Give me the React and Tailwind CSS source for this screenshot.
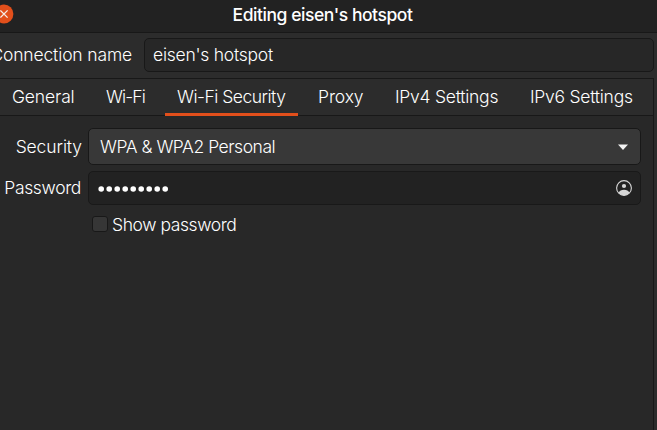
import React from "react";

const tabs = [
  { label: "General", box: "w-[86px] tracking-[-0.15px]" },
  { label: "Wi-Fi", box: "w-[63px] tracking-[-0.85px]" },
  { label: "Wi-Fi Security", box: "w-[133px] tracking-[-0.5px]", active: true },
  { label: "Proxy", box: "w-[69px] tracking-[-0.1px]" },
  { label: "IPv4 Settings", box: "w-[127px] tracking-[-0.25px]" },
  { label: "IPv6 Settings", box: "w-[127px] tracking-[-0.25px]" },
];

function TitleBar() {
  return (
    <header className="relative flex h-[33px] items-center justify-center border-b border-[#181818] bg-[#222222] pb-[3px] pr-3">
      <svg className="absolute -left-[6px] top-[4px]" width="20" height="20" viewBox="0 0 20 20">
        <circle cx="10" cy="10" r="9.4" fill="#e24f1b" />
        <path d="M6.4 6.4L13.6 13.6M13.6 6.4L6.4 13.6" stroke="#f5eeea" strokeWidth="1.3" />
      </svg>
      <h1 className="text-[17.5px] font-medium leading-6 tracking-[-0.45px] text-white">Editing eisen's hotspot</h1>
    </header>
  );
}

export default function App() {
  return (
    <div className="flex h-[430px] w-[657px] flex-col overflow-hidden whitespace-nowrap bg-[#2c2c2c] font-['Inter',sans-serif] text-[17.5px] font-light leading-6 text-white">
      <TitleBar />
      <div className="flex h-[45px] items-center pr-[3px]">
        <label className="-ml-[10px] w-[154px] pb-[2px] pr-[12px] text-right tracking-[-0.15px]">Connection name</label>
        <div className="mb-px flex h-[34px] flex-1 items-center rounded-[5px] border border-[#181818] bg-[#272727] pl-[8px] tracking-[-0.25px]">eisen's hotspot</div>
      </div>
      <section className="mr-[3px] flex flex-1 flex-col border-r border-t border-[#181818] bg-[#282828]">
        <nav className="flex h-[37px] gap-[8px] border-b border-[#181818] bg-[#2c2c2c]">
          {tabs.map((t) => (
            <div
              key={t.label}
              className={`flex h-[37px] shrink-0 items-center border-b-[3px] pl-[12px] pt-[2px] ${t.box} ${t.active ? "border-[#e24f1b]" : "border-transparent"}`}
            >
              {t.label}
            </div>
          ))}
        </nav>
        <div className="flex flex-col pr-[12px] pt-[12px]">
          <div className="flex h-[37px] items-center">
            <label className="w-[88px] pr-[6px] text-right tracking-[-0.1px]">Security</label>
            <div className="flex h-[37px] flex-1 items-center justify-between rounded-[5px] border border-[#181818] bg-[#383838] pl-[11px] pr-[12px]">
              <span className="tracking-[-0.46px]">WPA &amp; WPA2 Personal</span>
              <svg width="10" height="6" viewBox="0 0 10 6">
                <path d="M0 .5h10L5 6z" fill="#f2f2f2" />
              </svg>
            </div>
          </div>
          <div className="mt-[6px] flex h-[34px] items-center">
            <label className="w-[88px] pr-[7px] text-right tracking-[-0.35px]">Password</label>
            <div className="flex h-[34px] flex-1 items-center justify-between rounded-[5px] border border-[#191919] bg-[#222222] pl-[9px] pr-[8px]">
              <svg className="mt-px" width="71" height="6" viewBox="0 0 71 6">
                {Array.from({ length: 9 }, (_, i) => (
                  <circle key={i} cx={3.2 + i * 8} cy="3" r="2.8" fill="#ffffff" />
                ))}
              </svg>
              <svg width="16" height="16" viewBox="0 0 16 16">
                <circle cx="8" cy="8" r="7.4" fill="none" stroke="#d6d6d6" strokeWidth="1.1" />
                <circle cx="8" cy="6" r="2.1" fill="#d6d6d6" />
                <path d="M2.5 13C3.4 10.7 5.4 9.8 8 9.8s4.6.9 5.5 3.2A7.4 7.4 0 0 1 8 15.5 7.4 7.4 0 0 1 2.5 13z" fill="#d6d6d6" />
              </svg>
            </div>
          </div>
          <div className="mt-[8px] flex h-[24px] items-center pl-[92px]">
            <span className="mb-[2px] size-[16px] rounded-[3px] border border-[#181818] bg-[#363636]" />
            <span className="pl-[4px] tracking-[-0.42px]">Show password</span>
          </div>
        </div>
      </section>
    </div>
  );
}
